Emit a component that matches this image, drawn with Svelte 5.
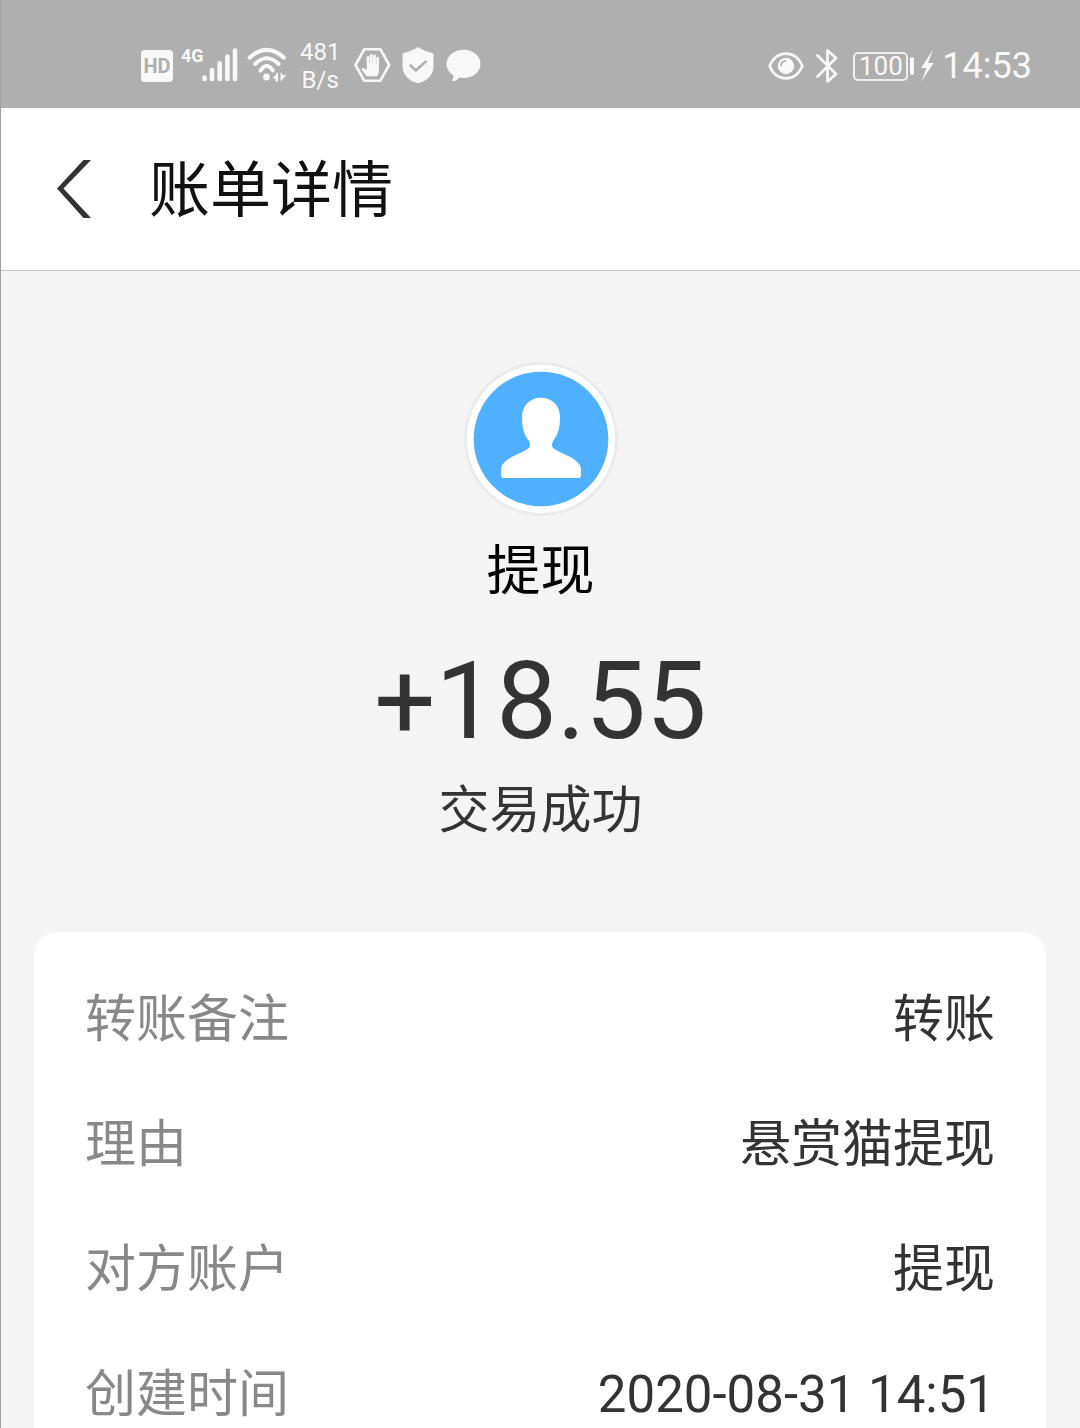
<script>
  let bill = {
    name: "提现",
    amount: "+18.55",
    status: "交易成功",
    details: [
      { label: "转账备注", value: "转账" },
      { label: "理由", value: "悬赏猫提现" },
      { label: "对方账户", value: "提现" },
      { label: "创建时间", value: "2020-08-31 14:51" },
    ],
  };
</script>

<div class="page">
  <div class="status-bar">
    <div class="group">
      <span class="hd">HD</span>
      <div class="signal">
        <span class="network">4G</span>
        <svg width="36" height="36" viewBox="0 0 36 36" stroke-width="4.6" stroke-linecap="round">
          <path d="M2.6 29.500v1.500M10 22v9M17.700 15.200V31M25.400 8.600V31M33 2.600V31" />
        </svg>
      </div>
      <svg class="wifi" width="40" height="38" viewBox="0 0 40 38" stroke-width="4" stroke-linecap="round">
        <path d="M2.600 10.700Q19.700-5 37 10.700M8 17Q19.700 5.500 31.600 17M13.600 23.500Q19.700 14.500 25.800 23.500" fill="none" />
        <circle class="fill" cx="19.500" cy="30" r="3.400" stroke="none" />
        <path class="fill" d="M25.500 31.500l5.500-6.500v9.500h-2.500v-3zM33.500 25v9.500l5.800-6.500h-3.300z" stroke="none" />
      </svg>
      <div class="speed">
        <span>481</span>
        <span>B/s</span>
      </div>
      <svg class="hand" width="37" height="38" viewBox="0 0 37 38">
        <path d="M10.200 2.300h16.200L35.200 18l-8.800 15.700H10.200L1.500 18z" fill="none" stroke-width="2.600" stroke-linejoin="round" />
        <path class="fill" d="M12.500 29.300C11 26 8 24.500 7.500 21.200c1.800-.8 3.700.2 5.200 2V10.500a1.400 1.400 0 0 1 2.800 0V17h.4V8.400a1.400 1.400 0 0 1 2.800 0V17h.4V8.800a1.400 1.400 0 0 1 2.800 0V17h.4v-6a1.300 1.300 0 0 1 2.700 0v12c0 3-1 4.500-2 6.300z" stroke="none" />
      </svg>
      <svg class="shield" width="32" height="38" viewBox="0 0 32 38">
        <path class="fill" d="M16 0C12 3 6 5 1.500 6Q.500 6 .500 7.500V19C.500 28 7 34 16 36.300 25 34 31.500 28 31.500 19V7.500Q31.500 6 30.500 6C26 5 20 3 16 0z" stroke="none" />
        <path class="cut" d="M7.800 17.800l6 5.600L24.500 14" fill="none" stroke-width="2.600" />
      </svg>
      <svg class="bubble" width="35" height="34" viewBox="0 0 35 34">
        <path class="fill" d="M17.500.800C27 .800 34.500 7 34.500 15S27 29 17.500 29c-1.500 0-3-.200-4.200-.500-2 2.500-4.300 3.700-7.500 3.500 1.200-1.800 1.600-3.700 1.400-5.800C3 23.500.500 19.500.500 15 .500 7 8 .800 17.500.800z" stroke="none" />
      </svg>
    </div>
    <div class="group">
      <svg width="36" height="28" viewBox="0 0 36 28">
        <path d="M1.600 14C5 6 11 1.600 18 1.600S31 6 34.400 14C31 22 25 26.400 18 26.400S5 22 1.600 14z" fill="none" stroke-width="2.600" />
        <circle class="fill" cx="18" cy="14" r="8.200" stroke="none" />
        <path class="cut" d="M13 14q0-5 5-5.200" fill="none" stroke-width="1.800" />
      </svg>
      <svg class="bluetooth" width="22" height="36" viewBox="0 0 22 36">
        <path d="M1.500 7.500L20 26l-8.500 7.500V2.500L20 10 1.500 28.500" fill="none" stroke-width="2.800" stroke-linejoin="round" stroke-linecap="round" />
      </svg>
      <div class="battery">
        <span class="level">100</span>
        <span class="cap"></span>
      </div>
      <svg class="bolt" width="14" height="32" viewBox="0 0 14 32">
        <path class="fill" d="M12.800 0L1 18h5.500L1.500 31.500 13.500 13H8z" stroke="none" />
      </svg>
      <time>14:53</time>
    </div>
  </div>

  <header>
    <button type="button" aria-label="返回">
      <svg width="34" height="58" viewBox="0 0 34 58">
        <path d="M26.500 0H34L6.500 28.500 34 58h-7.500L0 28.500z" fill="#333" stroke="none" />
      </svg>
    </button>
    <h1>账单详情</h1>
  </header>

  <main>
    <section class="summary">
      <svg class="avatar" width="154" height="154" viewBox="0 0 462 462">
        <circle cx="231" cy="231" r="231" fill="#ebebeb" />
        <circle cx="231" cy="231" r="222" fill="#fff" />
        <circle cx="231" cy="231" r="202" fill="#4eb0ff" />
        <path
          fill="#fff"
          d="M231 107c34 0 57 24 57 58 0 34-6 53-21 72-4 10-4 17 1 22 22 16 52 22 72 41 8 8 11 14 11 25v13q0 10-10 10H121q-10 0-10-10v-13c0-11 3-17 11-25 20-19 50-25 72-41 5-5 5-12 1-22-15-19-21-38-21-72 0-34 23-58 57-58z"
        />
      </svg>
      <h2>{bill.name}</h2>
      <p class="amount">{bill.amount}</p>
      <p class="state">{bill.status}</p>
    </section>

    <dl class="card">
      {#each bill.details as item}
        <div class="row">
          <dt>{item.label}</dt>
          <dd>{item.value}</dd>
        </div>
      {/each}
    </dl>
  </main>
</div>

<style>
  :global(body) {
    margin: 0;
    background: #f4f4f4;
  }

  .page {
    display: flex;
    flex-direction: column;
    box-sizing: border-box;
    min-height: 100vh;
    border-left: 1px solid #a0a0a0;
    font-family: Roboto, "Noto Sans CJK SC", sans-serif;
    color: #333;
  }

  svg {
    display: block;
    flex: none;
    stroke: #f8f8f8;
  }

  .avatar {
    stroke: none;
  }

  .fill {
    fill: #f8f8f8;
  }

  .cut {
    stroke: #afafaf;
  }

  .status-bar {
    display: flex;
    justify-content: space-between;
    box-sizing: border-box;
    height: 108px;
    padding: 24px 49px 0 140px;
    background: #afafaf;
    color: #f8f8f8;
  }

  .group {
    display: flex;
    align-items: center;
  }

  .hd {
    width: 32px;
    border-radius: 4px;
    background: #f8f8f8;
    color: #afafaf;
    font-size: 20px;
    font-weight: 700;
    line-height: 32px;
    text-align: center;
  }

  .signal {
    display: flex;
    align-items: flex-start;
    margin-left: 8px;
  }

  .network {
    width: 21px;
    font-size: 18px;
    font-weight: 700;
    line-height: 16px;
  }

  .wifi {
    margin-left: 9px;
  }

  .speed {
    display: flex;
    flex-direction: column;
    margin-left: 13px;
    font-size: 24px;
    line-height: 28px;
    text-align: center;
  }

  .hand {
    margin-left: 14px;
  }

  .shield {
    margin-left: 11px;
  }

  .bubble {
    margin-left: 12px;
  }

  .bluetooth {
    margin-left: 12px;
  }

  .battery {
    display: flex;
    align-items: center;
    gap: 2px;
    margin-left: 15px;
  }

  .level {
    box-sizing: border-box;
    width: 55px;
    border: 2px solid #f0f0f0;
    border-radius: 5px;
    font-size: 26px;
    line-height: 25px;
    text-align: center;
  }

  .cap {
    width: 4px;
    height: 18px;
    border-radius: 2px;
    background: #f8f8f8;
  }

  .bolt {
    margin-left: 6px;
  }

  time {
    margin-left: 8px;
    margin-right: -1px;
    font-size: 36px;
    line-height: 40px;
  }

  header {
    display: flex;
    align-items: center;
    height: 162px;
    padding-left: 56px;
    border-bottom: 1px solid #c4c4c4;
    background: #fff;
  }

  button {
    padding: 0;
    border: none;
    background: none;
    cursor: pointer;
  }

  h1 {
    margin: 4px 0 0 58px;
    color: #111;
    font-size: 61px;
    font-weight: 400;
    line-height: 80px;
  }

  main {
    display: flex;
    flex: 1;
    flex-direction: column;
  }

  .summary {
    display: flex;
    flex-direction: column;
    align-items: center;
    padding: 91px 0 87px;
  }

  h2 {
    margin: 21px 0 0;
    color: #000;
    font-size: 54px;
    font-weight: 400;
    line-height: 70px;
  }

  p {
    margin: 0;
  }

  .amount {
    margin-top: 29px;
    font-size: 108px;
    line-height: 130px;
  }

  .state {
    margin-top: 11px;
    font-size: 51px;
    line-height: 68px;
  }

  .card {
    display: flex;
    flex: 1;
    flex-direction: column;
    gap: 65px;
    margin: 0 34px 0 33px;
    padding: 58px 51px 0;
    border-radius: 24px 24px 0 0;
    background: #fff;
  }

  .row {
    display: flex;
    justify-content: space-between;
    font-size: 51px;
    line-height: 60px;
  }

  dt {
    color: #888;
  }

  dd {
    margin: 0;
  }
</style>
